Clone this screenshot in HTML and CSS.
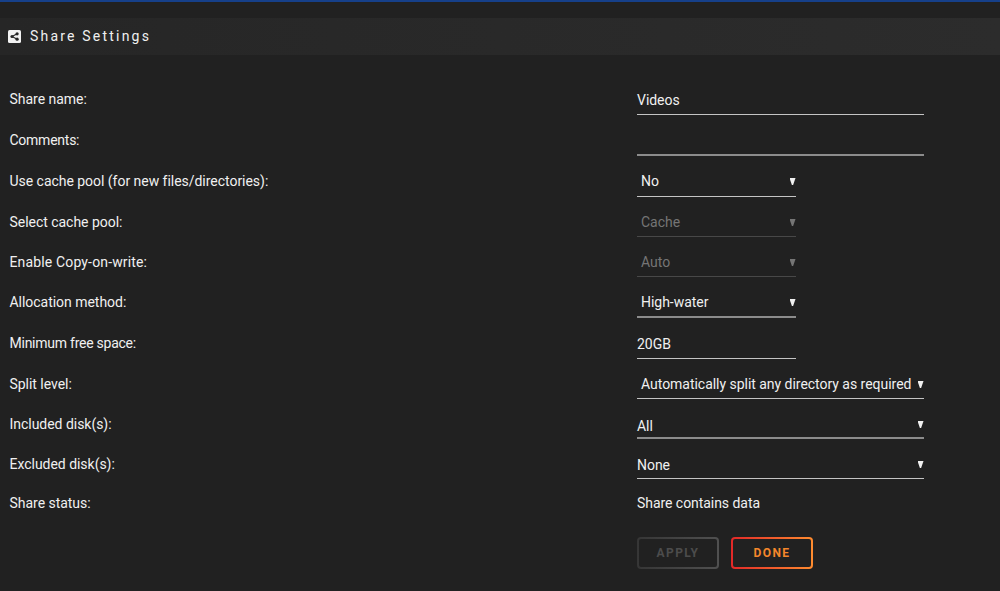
FILE: index.html
```html
<!DOCTYPE html>
<html lang="en">
<head>
<meta charset="utf-8">
<title>Share Settings</title>
<link rel="stylesheet" href="styles.css">
</head>
<body>
<header class="title">
  <svg class="title-icon" viewBox="0 0 13 13"><rect width="13" height="13" rx="1.6" fill="#f2f2f2"/><path d="M9.2 3.8 4 6.5l5.2 2.7" fill="none" stroke="#262626" stroke-width="1.1"/><circle cx="9.1" cy="3.8" r="1.6" fill="#262626"/><circle cx="4" cy="6.5" r="1.6" fill="#262626"/><circle cx="9.1" cy="9.2" r="1.6" fill="#262626"/></svg>
  <h1>Share Settings</h1>
</header>
<main class="form">
  <div class="row tall"><span class="label">Share name:</span><div class="field wide input"><span>Videos</span></div></div>
  <div class="row tall"><span class="label tight">Comments:</span><div class="field wide input soft"></div></div>
  <div class="row tall"><span class="label">Use cache pool (for new files/directories):</span><div class="field select"><span>No</span><i class="arrow"></i></div></div>
  <div class="row"><span class="label">Select cache pool:</span><div class="field select disabled"><span>Cache</span><i class="arrow"></i></div></div>
  <div class="row"><span class="label loose">Enable Copy-on-write:</span><div class="field select disabled"><span>Auto</span><i class="arrow"></i></div></div>
  <div class="row tall"><span class="label">Allocation method:</span><div class="field select soft"><span>High-water</span><i class="arrow"></i></div></div>
  <div class="row tall"><span class="label tight">Minimum free space:</span><div class="field input"><span>20GB</span></div></div>
  <div class="row"><span class="label">Split level:</span><div class="field wide select"><span>Automatically split any directory as required</span><i class="arrow"></i></div></div>
  <div class="row"><span class="label">Included disk(s):</span><div class="field wide disks soft"><span>All</span><i class="arrow"></i></div></div>
  <div class="row"><span class="label">Excluded disk(s):</span><div class="field wide disks"><span>None</span><i class="arrow"></i></div></div>
  <div class="row status"><span class="label">Share status:</span><span class="value">Share contains data</span></div>
  <div class="actions"><button class="button apply" disabled>APPLY</button><button class="button done">DONE</button></div>
</main>
</body>
</html>
```
FILE: styles.css
```css
* { box-sizing: border-box; }
body {
  margin: 0;
  height: 591px;
  overflow: hidden;
  border-top: 2px solid #16408a;
  background: #212121;
  color: #f0f0f0;
  font: 14px/20px Roboto, "Liberation Sans", sans-serif;
  letter-spacing: -0.03px;
}
.title {
  display: flex;
  align-items: center;
  gap: 9.5px;
  height: 37px;
  margin-top: 16px;
  padding: 0 0 1px 7.5px;
  background: linear-gradient(90deg, #262626, #2c2c2c);
}
.title-icon { width: 13px; height: 13px; }
.title h1 { margin: 0; font-size: 14px; font-weight: 400; letter-spacing: 2.2px; }
.form { padding-top: 19px; }
.row {
  display: flex;
  align-items: flex-end;
  height: 40px;
  padding-left: 9.5px;
}
.row.tall { height: 41px; }
.label { width: 627.5px; padding-bottom: 5px; white-space: nowrap; }
.tight { letter-spacing: -0.25px; }
.loose { letter-spacing: 0.15px; }
.value { padding-bottom: 5px; letter-spacing: -0.05px; }
.tall .label { padding-bottom: 6px; }
.field {
  display: flex;
  justify-content: space-between;
  width: 159px;
  height: 27px;
  border-bottom: 1px solid #c4c4c4;
  white-space: nowrap;
}
.wide { width: 287px; }
.input { padding-top: 2px; }
.select { padding: 2px 0 0 4px; }
.tall .select { padding-top: 1px; }
.disks { padding-top: 3px; }
.disks.soft { padding-top: 4px; }
.soft { border-bottom: 2px solid #8c8c8c; }
.disabled { color: #757575; border-color: #484848; }
.arrow {
  width: 6px;
  height: 7px;
  margin: 7px 0.5px 0 0;
  background: currentColor;
  clip-path: polygon(0 0, 100% 0, 60% 100%, 40% 100%);
}
.disks .arrow { margin-top: 6px; }
.disks.soft .arrow { margin-top: 5px; }
.status { height: 39px; }
.actions { display: flex; gap: 12px; padding: 19px 0 0 637px; }
.button {
  width: 82px;
  height: 32px;
  padding: 0;
  border: 2px solid transparent;
  border-radius: 4px;
  font: bold 12px/16px Roboto, "Liberation Sans", sans-serif;
  letter-spacing: 1.4px;
}
.apply {
  color: #4c4c4c;
  background: linear-gradient(#212121, #212121) padding-box, linear-gradient(90deg, #363636, #505050) border-box;
}
.done {
  color: #f5872b;
  background: linear-gradient(#212121, #212121) padding-box, linear-gradient(90deg, #e22828, #ff8c2f) border-box;
}
```
